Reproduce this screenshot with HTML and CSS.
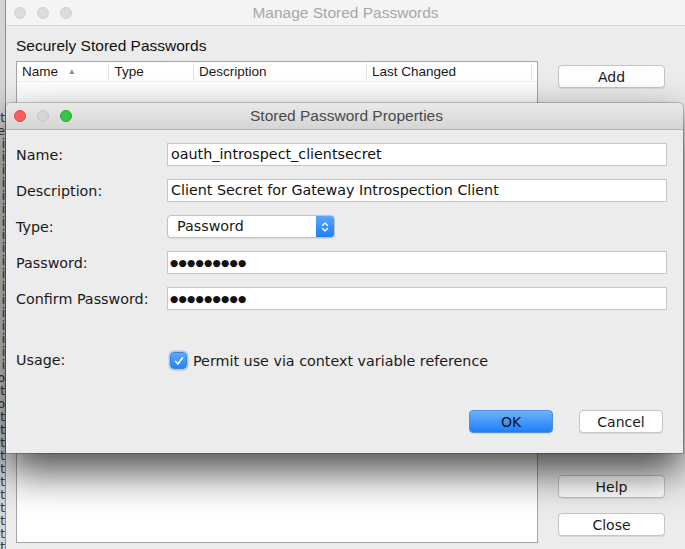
FILE: index.html
```html
<!DOCTYPE html>
<html>
<head>
<meta charset="utf-8">
<link rel="stylesheet" href="styles.css">
</head>
<body>
<div class="desktop">
  <div class="behind">
    <div class="behind-line">t</div><div class="behind-line">e</div><div class="behind-line">i</div>
    <div class="behind-line">i</div><div class="behind-line">i</div><div class="behind-line">i</div>
    <div class="behind-line">i</div><div class="behind-line">i</div><div class="behind-line">i</div>
    <div class="behind-line">i</div><div class="behind-line">i</div><div class="behind-line">i</div>
    <div class="behind-line">i</div><div class="behind-line">i</div><div class="behind-line">i</div>
    <div class="behind-line">i</div><div class="behind-line">i</div><div class="behind-line">i</div>
    <div class="behind-line">i</div><div class="behind-line">i</div><div class="behind-line">o</div>
    <div class="behind-line">t</div><div class="behind-line">o</div><div class="behind-line">t</div>
    <div class="behind-line">t</div><div class="behind-line">t</div><div class="behind-line">t</div>
    <div class="behind-line">t</div><div class="behind-line">t</div><div class="behind-line">t</div>
    <div class="behind-line">t</div><div class="behind-line">t</div><div class="behind-line">t</div>
    <div class="behind-line">t</div><div class="behind-line">t</div><div class="behind-line">t</div>
    <div class="behind-line sel">r</div>
  </div>

  <div class="win outer">
    <div class="titlebar inactive">
      <div class="lights">
        <span class="light gray"></span><span class="light gray"></span><span class="light gray"></span>
      </div>
      <div class="title">Manage Stored Passwords</div>
    </div>
    <div class="outer-body">
      <div class="list-col">
        <div class="section-label">Securely Stored Passwords</div>
        <div class="table">
          <div class="thead">
            <div class="th c1">Name <span class="sort">&#9650;</span></div>
            <div class="th c2">Type</div>
            <div class="th c3">Description</div>
            <div class="th c4">Last Changed</div>
            <div class="th c5"></div>
          </div>
          <div class="tbody"></div>
        </div>
      </div>
      <div class="btn-col">
        <button class="mbtn">Add</button>
        <div class="spacer"></div>
        <button class="mbtn">Help</button>
        <button class="mbtn">Close</button>
      </div>
    </div>
  </div>

  <div class="win dialog">
    <div class="titlebar active">
      <div class="lights">
        <span class="light red"></span><span class="light gray"></span><span class="light green"></span>
      </div>
      <div class="title dark">Stored Password Properties</div>
    </div>
    <div class="dialog-body">
      <div class="form">
        <label class="lbl">Name:</label>
        <div class="field">oauth_introspect_clientsecret</div>
        <label class="lbl">Description:</label>
        <div class="field">Client Secret for Gateway Introspection Client</div>
        <label class="lbl">Type:</label>
        <div class="select-wrap">
          <div class="select">
            <span class="select-text">Password</span>
            <span class="stepper">
              <svg width="10" height="14" viewBox="0 0 10 14"><path d="M2.5 5.5 L5 3 L7.5 5.5 M2.5 8.5 L5 11 L7.5 8.5" fill="none" stroke="#fff" stroke-width="1.3" stroke-linecap="round" stroke-linejoin="round"/></svg>
            </span>
          </div>
        </div>
        <label class="lbl">Password:</label>
        <div class="field dots">&#9679;&#9679;&#9679;&#9679;&#9679;&#9679;&#9679;&#9679;&#9679;</div>
        <label class="lbl">Confirm Password:</label>
        <div class="field dots">&#9679;&#9679;&#9679;&#9679;&#9679;&#9679;&#9679;&#9679;&#9679;</div>
        <label class="lbl usage">Usage:</label>
        <div class="check-row usage">
          <span class="checkbox">
            <svg width="12" height="12" viewBox="0 0 12 12"><path d="M2.5 6.3 L5 9 L9.5 2.8" fill="none" stroke="#fff" stroke-width="1.6" stroke-linecap="round" stroke-linejoin="round"/></svg>
          </span>
          <span class="check-text">Permit use via context variable reference</span>
        </div>
      </div>
      <div class="actions">
        <button class="dbtn primary">OK</button>
        <button class="dbtn">Cancel</button>
      </div>
    </div>
  </div>
</div>
</body>
</html>
```

FILE: styles.css
```css
* { box-sizing: border-box; }
html, body { margin: 0; padding: 0; }
body {
  width: 685px;
  height: 549px;
  overflow: hidden;
  font-family: "DejaVu Sans", "Liberation Sans", sans-serif;
  color: #1a1a1a;
}
.desktop {
  position: relative;
  width: 685px;
  height: 549px;
  overflow: hidden;
  background: #cfcfcf;
}
.behind {
  position: absolute;
  left: -4px;
  top: 0;
  width: 9px;
  font-family: "DejaVu Sans", sans-serif;
  font-size: 12px;
  color: #333;
  background: #d4d4d4;
  padding-top: 112px;
}
.behind-line { height: 13px; line-height: 13px; text-align: right; }
.behind-line.sel { background: #3a74c9; color: #fff; height: 20px; margin-top: 4px; }

.win {
  position: absolute;
  background: #ececec;
}
.outer {
  left: 5px;
  top: 0;
  width: 690px;
  height: 560px;
  border-left: 1px solid #8e8e8e;
}
.titlebar {
  position: relative;
  display: flex;
  align-items: center;
  justify-content: center;
}
.titlebar.inactive {
  height: 26px;
  background: #f4f4f4;
  border-bottom: 1px solid #d6d6d6;
}
.titlebar.active {
  height: 27px;
  background: linear-gradient(#e9e9e9, #d5d5d5);
  border-bottom: 1px solid #b4b4b4;
  border-radius: 5px 5px 0 0;
}
.lights {
  position: absolute;
  left: 8px;
  top: 0;
  bottom: 0;
  display: flex;
  align-items: center;
  gap: 11px;
}
.light {
  width: 12px;
  height: 12px;
  border-radius: 50%;
  display: inline-block;
}
.light.gray { background: #d6d6d6; border: 1px solid #c8c8c8; }
.outer .light.gray { background: #dcdcdc; border-color: #d0d0d0; }
.light.red { background: #fc605c; border: 1px solid #e3463f; }
.light.green { background: #34c748; border: 1px solid #28a93a; }
.title {
  font-family: "Liberation Sans", sans-serif;
  font-size: 15.5px;
  color: #a8a8a8;
}
.outer .title { margin-left: -10px; }
.title.dark { color: #4a4a4a; font-size: 15.5px; margin-left: 4px; }

.outer-body {
  display: flex;
  padding: 11px 0 0 10px;
}
.list-col { width: 522px; }
.section-label {
  font-family: "Liberation Sans", sans-serif;
  font-size: 15.5px;
  color: #111;
  height: 24px;
  line-height: 18px;
  padding-left: 0;
}
.table {
  border: 1px solid #a5a5a5;
  background: #fff;
  height: 482px;
}
.thead {
  display: flex;
  height: 20px;
  background: #fff;
  border-bottom: 1px solid #f0f0f0;
  font-family: "Liberation Sans", sans-serif;
  font-size: 13.5px;
  color: #1a1a1a;
}
.th {
  padding: 2px 0 0 5px;
  border-right: 1px solid #e4e4e4;
  height: 17px;
  margin-top: 1px;
  line-height: 14px;
  white-space: nowrap;
}
.c1 { width: 93px; }
.c2 { width: 85px; }
.c3 { width: 174px; }
.c4 { width: 166px; }
.c5 { border-right: none; flex: 1; }
.sort { font-size: 8px; color: #8a8a8a; margin-left: 6px; vertical-align: 2px; }
.tbody { height: 460px; }

.btn-col {
  display: flex;
  flex-direction: column;
  padding-left: 20px;
  padding-top: 28px;
}
.mbtn {
  width: 107px;
  height: 23px;
  background: #fff;
  border: 1px solid #c4c4c4;
  border-radius: 4px;
  font-family: "DejaVu Sans", sans-serif;
  font-size: 14px;
  color: #1a1a1a;
  padding: 0;
  box-shadow: 0 1px 0 rgba(0,0,0,0.08);
}
.spacer { height: 387px; }
.mbtn + .mbtn { margin-top: 15px; }

.dialog {
  left: 6px;
  top: 103px;
  width: 677px;
  height: 350px;
  border-radius: 5px 5px 0 0;
  box-shadow: 0 18px 42px rgba(0,0,0,0.72), 0 0 0 1px rgba(0,0,0,0.2);
}
.dialog-body {
  padding: 13px 16px 0 10px;
}
.form {
  display: grid;
  grid-template-columns: 151px 500px;
  grid-template-rows: 23px 23px 23px 23px 23px 49px;
  row-gap: 13px;
  align-items: center;
}
.lbl {
  color: #1a1a1a;
  font-size: 14.3px;
  white-space: nowrap;
}
.field {
  height: 23px;
  background: #fff;
  border: 1px solid #c6c6c6;
  padding: 0 0 0 3px;
  line-height: 21px;
  font-size: 14.3px;
  color: #111;
  white-space: nowrap;
  overflow: hidden;
}
.field.dots { font-size: 9.5px; letter-spacing: 0.2px; padding-left: 2px; }
.select-wrap { height: 23px; }
.select {
  display: flex;
  width: 168px;
  height: 23px;
  background: #fff;
  border: 1px solid #c2c2c2;
  border-radius: 4px;
  overflow: hidden;
  box-shadow: 0 1px 1px rgba(0,0,0,0.08);
}
.select-text {
  flex: 1;
  padding-left: 9px;
  line-height: 21px;
  font-size: 14.3px;
}
.stepper {
  width: 18px;
  background: linear-gradient(#59a6fb, #1b7ffa);
  display: flex;
  align-items: center;
  justify-content: center;
}
.lbl.usage { align-self: end; line-height: 23px; }
.check-row.usage { align-self: end; }
.check-row {
  display: flex;
  align-items: center;
  height: 23px;
}
.checkbox {
  width: 17px;
  height: 17px;
  margin-left: 3px;
  border-radius: 4px;
  background: linear-gradient(#5eaafc, #2184fb);
  border: 1px solid #3b84d8;
  box-shadow: 0 0 0 1.5px rgba(120,170,240,0.55);
  display: flex;
  align-items: center;
  justify-content: center;
}
.check-text {
  margin-left: 6px;
  font-size: 14.3px;
}
.actions {
  display: flex;
  justify-content: flex-end;
  gap: 26px;
  margin-top: 38px;
  padding-right: 4px;
}
.dbtn {
  width: 84px;
  height: 23px;
  background: #fff;
  border: 1px solid #c4c4c4;
  border-radius: 4px;
  font-family: "DejaVu Sans", sans-serif;
  font-size: 14px;
  color: #1a1a1a;
  padding: 0;
  box-shadow: 0 1px 0 rgba(0,0,0,0.08);
}
.dbtn.primary {
  background: linear-gradient(#6db2fb, #1b7ffb);
  border-color: #4a90e2;
  color: #111;
}
```
